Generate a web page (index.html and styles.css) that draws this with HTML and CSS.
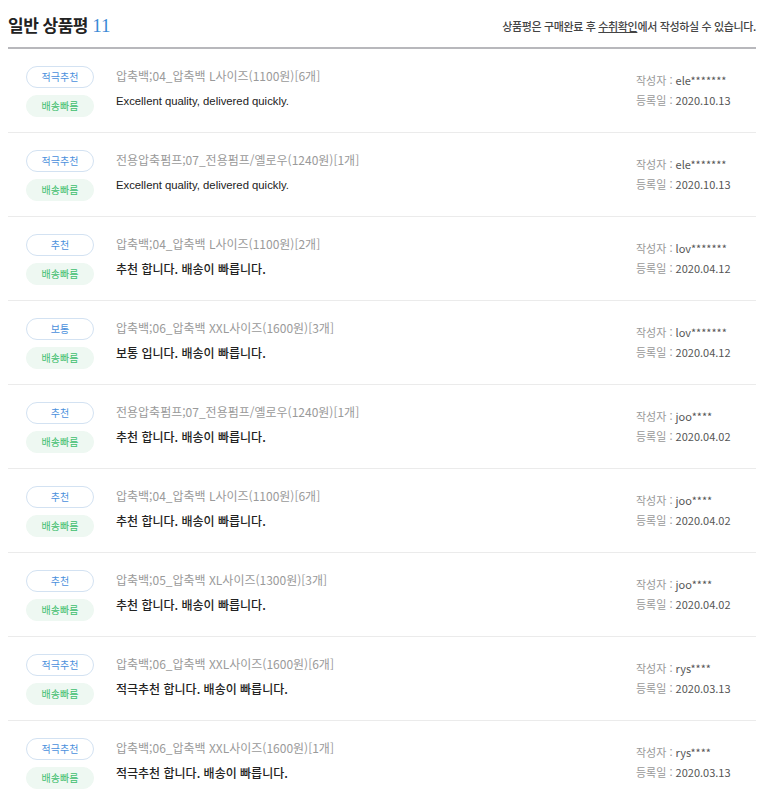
FILE: index.html
```html
<!DOCTYPE html>
<html lang="ko">
<head>
  <meta charset="UTF-8" />
  <meta name="viewport" content="width=device-width, initial-scale=1.0"/>
  <title>일반 상품평</title>
  <link rel="stylesheet" href="styles.css">
</head>
<body>

<div class="review-wrap">

  <div class="review-head">
    <h2 class="review-title">일반 상품평 <span class="review-count">11</span></h2>
    <p class="review-notice">상품평은 구매완료 후 <a href="#">수취확인</a>에서 작성하실 수 있습니다.</p>
  </div>

  <ul class="review-list">
    <li class="review">
      <div class="badges">
        <span class="badge grade">적극추천</span>
        <span class="badge ship">배송빠름</span>
      </div>
      <div class="review-body">
        <p class="option">압축백;04_압축백 L사이즈(1100원)[6개]</p>
        <p class="text en">Excellent quality, delivered quickly.</p>
      </div>
      <div class="meta">
        <p>작성자 : <span>ele*******</span></p>
        <p>등록일 : <span>2020.10.13</span></p>
      </div>
    </li>
    <li class="review">
      <div class="badges">
        <span class="badge grade">적극추천</span>
        <span class="badge ship">배송빠름</span>
      </div>
      <div class="review-body">
        <p class="option">전용압축펌프;07_전용펌프/옐로우(1240원)[1개]</p>
        <p class="text en">Excellent quality, delivered quickly.</p>
      </div>
      <div class="meta">
        <p>작성자 : <span>ele*******</span></p>
        <p>등록일 : <span>2020.10.13</span></p>
      </div>
    </li>
    <li class="review">
      <div class="badges">
        <span class="badge grade">추천</span>
        <span class="badge ship">배송빠름</span>
      </div>
      <div class="review-body">
        <p class="option">압축백;04_압축백 L사이즈(1100원)[2개]</p>
        <p class="text">추천 합니다. 배송이 빠릅니다.</p>
      </div>
      <div class="meta">
        <p>작성자 : <span>lov*******</span></p>
        <p>등록일 : <span>2020.04.12</span></p>
      </div>
    </li>
    <li class="review">
      <div class="badges">
        <span class="badge grade">보통</span>
        <span class="badge ship">배송빠름</span>
      </div>
      <div class="review-body">
        <p class="option">압축백;06_압축백 XXL사이즈(1600원)[3개]</p>
        <p class="text">보통 입니다. 배송이 빠릅니다.</p>
      </div>
      <div class="meta">
        <p>작성자 : <span>lov*******</span></p>
        <p>등록일 : <span>2020.04.12</span></p>
      </div>
    </li>
    <li class="review">
      <div class="badges">
        <span class="badge grade">추천</span>
        <span class="badge ship">배송빠름</span>
      </div>
      <div class="review-body">
        <p class="option">전용압축펌프;07_전용펌프/옐로우(1240원)[1개]</p>
        <p class="text">추천 합니다. 배송이 빠릅니다.</p>
      </div>
      <div class="meta">
        <p>작성자 : <span>joo****</span></p>
        <p>등록일 : <span>2020.04.02</span></p>
      </div>
    </li>
    <li class="review">
      <div class="badges">
        <span class="badge grade">추천</span>
        <span class="badge ship">배송빠름</span>
      </div>
      <div class="review-body">
        <p class="option">압축백;04_압축백 L사이즈(1100원)[6개]</p>
        <p class="text">추천 합니다. 배송이 빠릅니다.</p>
      </div>
      <div class="meta">
        <p>작성자 : <span>joo****</span></p>
        <p>등록일 : <span>2020.04.02</span></p>
      </div>
    </li>
    <li class="review">
      <div class="badges">
        <span class="badge grade">추천</span>
        <span class="badge ship">배송빠름</span>
      </div>
      <div class="review-body">
        <p class="option">압축백;05_압축백 XL사이즈(1300원)[3개]</p>
        <p class="text">추천 합니다. 배송이 빠릅니다.</p>
      </div>
      <div class="meta">
        <p>작성자 : <span>joo****</span></p>
        <p>등록일 : <span>2020.04.02</span></p>
      </div>
    </li>
    <li class="review">
      <div class="badges">
        <span class="badge grade">적극추천</span>
        <span class="badge ship">배송빠름</span>
      </div>
      <div class="review-body">
        <p class="option">압축백;06_압축백 XXL사이즈(1600원)[6개]</p>
        <p class="text">적극추천 합니다. 배송이 빠릅니다.</p>
      </div>
      <div class="meta">
        <p>작성자 : <span>rys****</span></p>
        <p>등록일 : <span>2020.03.13</span></p>
      </div>
    </li>
    <li class="review">
      <div class="badges">
        <span class="badge grade">적극추천</span>
        <span class="badge ship">배송빠름</span>
      </div>
      <div class="review-body">
        <p class="option">압축백;06_압축백 XXL사이즈(1600원)[1개]</p>
        <p class="text">적극추천 합니다. 배송이 빠릅니다.</p>
      </div>
      <div class="meta">
        <p>작성자 : <span>rys****</span></p>
        <p>등록일 : <span>2020.03.13</span></p>
      </div>
    </li>
  </ul>

</div>

</body>
</html>
```

FILE: styles.css
```css
body {
  font-family: 'Noto Sans CJK KR', 'Noto Sans', sans-serif;
  background: #fff;
  color: #222;
  margin: 8px;
}

p {
  margin: 0;
}

.review-wrap {
  width: 748px;
}

.review-head {
  display: flex;
  justify-content: space-between;
  align-items: center;
  height: 33px;
  padding-bottom: 6px;
  border-bottom: 2px solid #b8b8bc;
}

.review-title {
  margin: 0;
  font-size: 17px;
  font-weight: bold;
  color: #222;
  letter-spacing: -0.5px;
}

.review-count {
  font-family: 'Liberation Serif', serif;
  font-weight: normal;
  font-size: 19px;
  color: #3a8ad6;
  letter-spacing: 0;
}

.review-notice {
  font-size: 11px;
  font-weight: 500;
  color: #444;
  letter-spacing: -0.35px;
  margin-top: 2px;
}

.review-notice a {
  color: #444;
  text-decoration: underline;
}

.review-list {
  list-style: none;
  margin: 0;
  padding: 0;
}

.review {
  display: flex;
  align-items: flex-start;
  padding: 17px 0 15px 18px;
  border-bottom: 1px solid #ebebeb;
}

.review:last-child {
  border-bottom: none;
}

.badges {
  display: flex;
  flex-direction: column;
  gap: 7px;
  width: 68px;
  margin-right: 22px;
}

.badge {
  display: block;
  height: 22px;
  line-height: 20px;
  border: 1px solid transparent;
  border-radius: 11px;
  text-align: center;
  font-size: 10px;
  box-sizing: border-box;
}

.badge.grade {
  border-color: #d3e2f2;
  color: #4a8fdc;
}

.badge.ship {
  background: #eef8f2;
  border-color: #eef8f2;
  color: #3fbe6e;
}

.review-body {
  flex: 1;
  font-size: 12px;
}

.review-body .option {
  line-height: 20px;
  color: #9a9a9a;
}

.review-body .text {
  margin-top: 5px;
  line-height: 20px;
  color: #222;
  font-weight: 500;
}

.review-body .text.en {
  font-family: 'Liberation Sans', sans-serif;
  font-size: 11.3px;
  font-weight: normal;
}

.meta {
  width: 120px;
  font-size: 11px;
  line-height: 20px;
  color: #999;
  margin-top: 4px;
}

.meta span {
  color: #555;
}
```
